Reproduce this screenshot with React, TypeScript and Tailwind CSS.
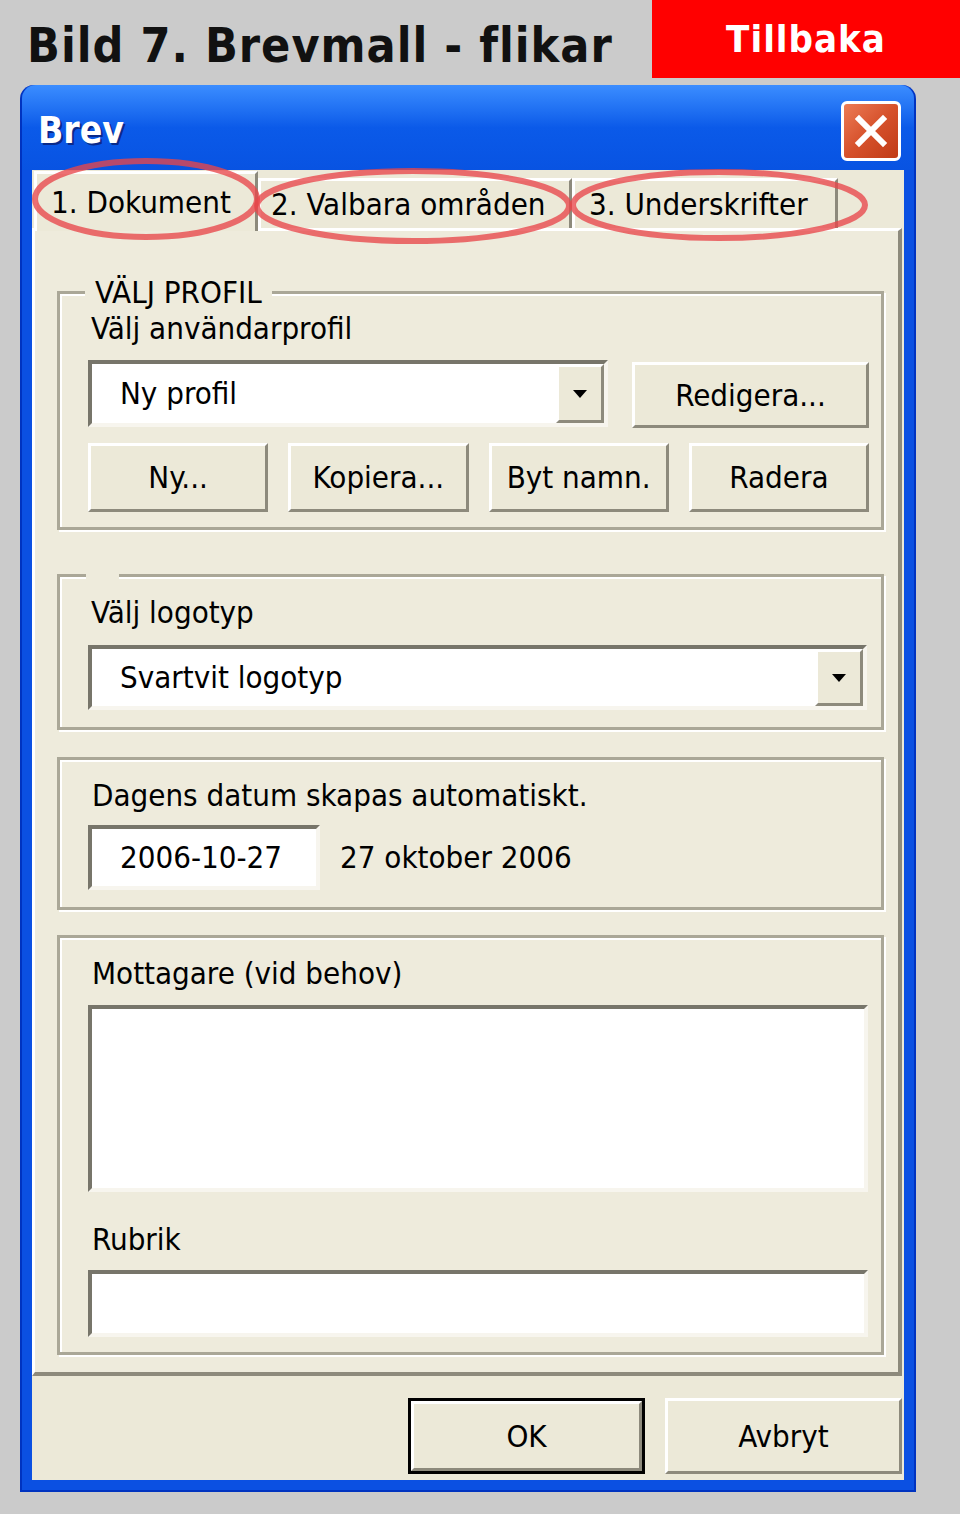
import React from 'react';

const raised =
  'bg-[#ece9d8] border-[3px] border-t-white border-l-white border-r-[#8d8a7c] border-b-[#8d8a7c]';
const sunken =
  'bg-white border-[4px] border-t-[#77756a] border-l-[#77756a] border-r-[#f7f5ee] border-b-[#f7f5ee]';
const group =
  'border-[3px] border-[#aaa797] shadow-[inset_2px_2px_0_#ffffff,2px_2px_0_#ffffff]';

function Btn({ label, className = '' }: { label: string; className?: string }) {
  return (
    <div className={`${raised} flex items-center justify-center ${className}`}>
      <span className="leading-none">{label}</span>
    </div>
  );
}

function DropArrow() {
  return (
    <div className={`${raised} w-[48px] h-full flex items-center justify-center`}>
      <svg width="16" height="10" viewBox="0 0 16 10">
        <polygon points="1,1 15,1 8,9" fill="#000" />
      </svg>
    </div>
  );
}

function Combo({ value, className = '' }: { value: string; className?: string }) {
  return (
    <div className={`${sunken} flex items-stretch ${className}`}>
      <div className="flex-1 flex items-center pl-[28px]">{value}</div>
      <DropArrow />
    </div>
  );
}

function Tab({ label, selected, className = '' }: { label: string; selected?: boolean; className?: string }) {
  return (
    <div
      className={`flex items-center border-t-[3px] border-l-[3px] border-r-[3px] border-t-white border-l-white border-r-[#8d8a7c] bg-[#ece9d8] ${
        selected ? 'h-[60px] z-10 -mb-[3px] pl-[14px]' : 'h-[50px] pl-[10px]'
      } ${className}`}
    >
      {label}
    </div>
  );
}

export default function App() {
  return (
    <div className="w-[960px] h-[1514px] bg-[#cbcbcb] font-['DejaVu_Sans_Condensed','DejaVu_Sans',sans-serif] text-[31px] text-black overflow-hidden">
      {/* page header */}
      <div className="h-[85px] flex justify-between items-start">
        <h1 className="pl-[27px] pt-[18px] text-[48px] font-bold leading-[54px] tracking-[1px] text-[#111]">
          Bild 7. Brevmall - flikar
        </h1>
        <div className="w-[308px] h-[78px] bg-[#ff0000] flex items-center justify-center text-white font-bold text-[38px] tracking-[1px]">
          Tillbaka
        </div>
      </div>

      {/* dialog window */}
      <div className="ml-[20px] w-[896px] h-[1407px] rounded-t-[14px] bg-[#0b50e2] border-[2px] border-t-0 border-[#0033c0] px-[10px] pb-[10px] flex flex-col">
        <div className="h-[85px] -mx-[10px] px-[16px] rounded-t-[14px] bg-linear-to-b from-[#3b8dff] via-[#0b5ae9] to-[#0853e2] flex items-center justify-between">
          <span className="text-white font-bold text-[37px] leading-none pt-[6px] [text-shadow:2px_2px_0_#0a2a8a]">Brev</span>
          <div className="w-[60px] h-[60px] mt-[6px] -mr-[3px] rounded-[6px] border-[3px] border-white bg-linear-to-br from-[#ec7b55] via-[#d6512b] to-[#c03a16] flex items-center justify-center">
            <svg width="34" height="34" viewBox="0 0 34 34">
              <path d="M5 5 L29 29 M29 5 L5 29" stroke="#fff" strokeWidth="6" strokeLinecap="square" />
            </svg>
          </div>
        </div>

        <div className="relative flex-1 bg-[#ece9d8] flex flex-col">
          {/* tab strip */}
          <div className="h-[58px] flex items-end pl-[2px]">
            <Tab label="1. Dokument" selected className="w-[224px]" />
            <Tab label="2. Valbara områden" className="w-[314px]" />
            <Tab label="3. Underskrifter" className="w-[266px] pl-[14px]" />
          </div>

          {/* tab panel */}
          <div className="h-[1148px] mr-[2px] border-t-[3px] border-l-[3px] border-t-white border-l-white border-r-[4px] border-b-[4px] border-r-[#8d8a7c] border-b-[#8d8a7c] bg-[#eeebdc] pl-[22px] pr-[14px] flex flex-col">
            <fieldset className={`${group} mt-[43px] h-[256px] pl-[28px] pr-[12px] pb-[15px] flex flex-col`}>
              <legend className="-ml-[3px] px-[10px] leading-[36px] bg-[#eeebdc]">VÄLJ PROFIL</legend>
              <div className="leading-[36px] ml-[3px]">Välj användarprofil</div>
              <div className="mt-[14px] flex gap-[24px] h-[67px]">
                <Combo value="Ny profil" className="w-[520px]" />
                <Btn label="Redigera..." className="w-[237px] h-[66px] mt-[2px]" />
              </div>
              <div className="mt-[16px] grid grid-cols-4 gap-[20px] h-[69px]">
                <Btn label="Ny..." />
                <Btn label="Kopiera..." />
                <Btn label="Byt namn." />
                <Btn label="Radera" />
              </div>
            </fieldset>

            <fieldset className={`${group} mt-[35px] h-[165px] pl-[28px] pr-[14px] flex flex-col`}>
              <legend className="-ml-[2px] w-[33px] h-[20px] bg-[#eeebdc]"></legend>
              <div className="mt-[9px] leading-[36px] ml-[3px]">Välj logotyp</div>
              <Combo value="Svartvit logotyp" className="mt-[15px] h-[65px]" />
            </fieldset>

            <div className={`${group} mt-[27px] h-[153px] pl-[28px] pt-[17px]`}>
              <div className="leading-[36px] ml-[4px]">Dagens datum skapas automatiskt.</div>
              <div className="mt-[12px] flex items-center gap-[20px]">
                <div className={`${sunken} w-[232px] h-[65px] flex items-center pl-[28px]`}>2006-10-27</div>
                <span>27 oktober 2006</span>
              </div>
            </div>

            <div className={`${group} mt-[25px] h-[420px] pl-[28px] pr-[13px] pt-[17px] flex flex-col`}>
              <div className="leading-[36px] ml-[4px]">Mottagare (vid behov)</div>
              <div className={`${sunken} mt-[14px] h-[187px]`} />
              <div className="mt-[29px] leading-[36px] ml-[4px]">Rubrik</div>
              <div className={`${sunken} mt-[13px] h-[67px]`} />
            </div>
          </div>

          {/* bottom buttons */}
          <div className="flex justify-end gap-[20px] pt-[22px] pr-[2px]">
            <div className="w-[237px] h-[76px] border-[3px] border-black flex">
              <Btn label="OK" className="flex-1" />
            </div>
            <Btn label="Avbryt" className="w-[237px] h-[76px]" />
          </div>

          {/* red annotation ellipses */}
          <svg className="absolute left-0 top-[-20px] z-20 pointer-events-none" width="870" height="110" viewBox="0 0 870 110">
            <g fill="none" stroke="#e8474a" strokeOpacity="0.78" strokeWidth="6">
              <ellipse cx="114" cy="49" rx="111" ry="38" />
              <ellipse cx="381" cy="56" rx="156" ry="35" />
              <ellipse cx="687" cy="55" rx="146" ry="33" />
            </g>
          </svg>
        </div>
      </div>
    </div>
  );
}
